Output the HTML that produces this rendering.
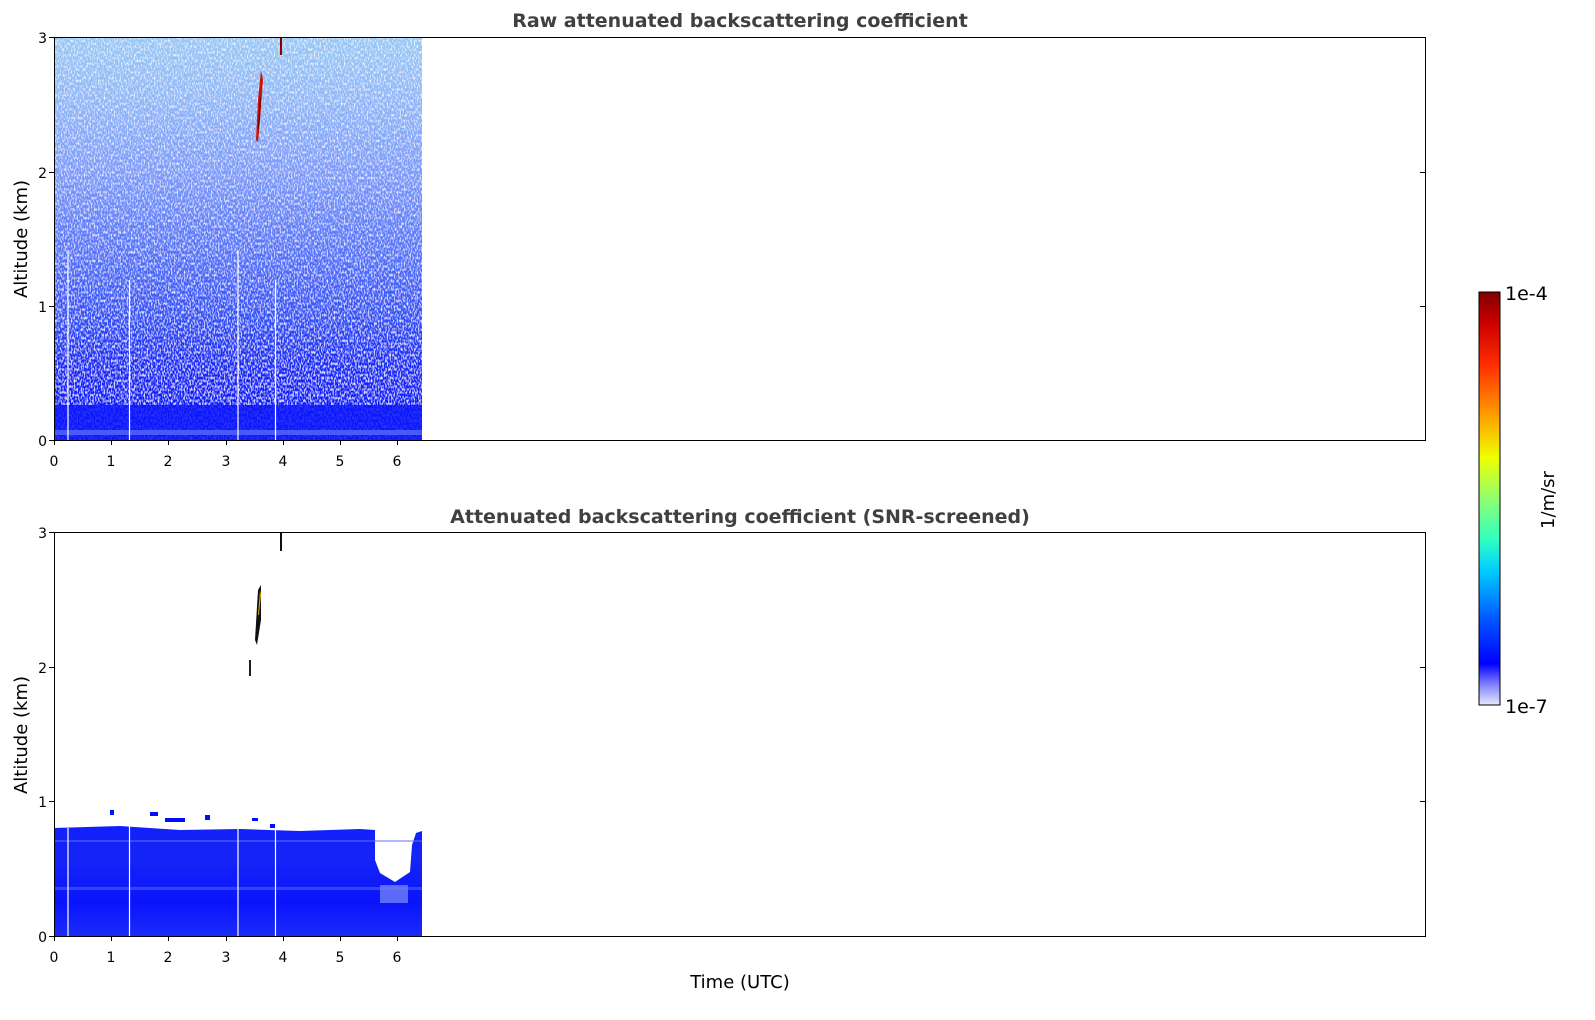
<!DOCTYPE html>
<html><head><meta charset="utf-8"><style>
html,body{margin:0;padding:0;background:#fff;width:1595px;height:1020px;overflow:hidden}
svg text{font-family:"DejaVu Sans","Liberation Sans",sans-serif}
</style></head><body>
<svg width="1595" height="1020" viewBox="0 0 1595 1020" xmlns="http://www.w3.org/2000/svg">
<defs>
<linearGradient id="top" x1="0" y1="1" x2="0" y2="0">
<stop offset="0" stop-color="#0a18fa"/>
<stop offset="0.1" stop-color="#1020fa"/>
<stop offset="0.2" stop-color="#1a30f8"/>
<stop offset="0.3" stop-color="#3050f8"/>
<stop offset="0.45" stop-color="#5070fa"/>
<stop offset="0.65" stop-color="#7898fa"/>
<stop offset="0.85" stop-color="#90b8f8"/>
<stop offset="1" stop-color="#98c8f4"/>
</linearGradient>
<filter id="nz" x="0" y="0" width="100%" height="100%">
<feTurbulence type="fractalNoise" baseFrequency="0.7 0.35" numOctaves="1" seed="3" result="t"/>
<feColorMatrix in="t" type="matrix" values="0 0 0 0 1  0 0 0 0 1  0 0 0 0 1  0 0 0 2.6 -1.2" result="w"/>
<feComposite in="w" in2="SourceGraphic" operator="in" result="wm"/>
<feMerge><feMergeNode in="SourceGraphic"/><feMergeNode in="wm"/></feMerge>
</filter>
<linearGradient id="cb" x1="0" y1="1" x2="0" y2="0">
<stop offset="0" stop-color="#e8e8ff"/>
<stop offset="0.05" stop-color="#8080ff"/>
<stop offset="0.1" stop-color="#0000ff"/>
<stop offset="0.2" stop-color="#0050ff"/>
<stop offset="0.33" stop-color="#00d0ff"/>
<stop offset="0.4" stop-color="#30ffc0"/>
<stop offset="0.5" stop-color="#90ff70"/>
<stop offset="0.6" stop-color="#f0ff00"/>
<stop offset="0.7" stop-color="#ffa000"/>
<stop offset="0.82" stop-color="#ff3000"/>
<stop offset="0.92" stop-color="#d00000"/>
<stop offset="1" stop-color="#800000"/>
</linearGradient>
<linearGradient id="bot" x1="0" y1="1" x2="0" y2="0">
<stop offset="0" stop-color="#1a2cf8"/>
<stop offset="0.3" stop-color="#0a14fc"/>
<stop offset="0.72" stop-color="#1525f6"/>
<stop offset="1" stop-color="#1020fa"/>
</linearGradient>
</defs>

<text x="740" y="27" text-anchor="middle" font-size="19" font-weight="bold" fill="#404040">Raw attenuated backscattering coefficient</text>
<text x="740" y="523" text-anchor="middle" font-size="19" font-weight="bold" fill="#404040">Attenuated backscattering coefficient (SNR-screened)</text>

<rect x="54" y="37" width="368" height="403" fill="url(#top)" filter="url(#nz)"/>
<rect x="54" y="405" width="368" height="35" fill="#0c18fa" opacity="0.85"/>
<rect x="54" y="430" width="368" height="5" fill="#4a5af8"/>
<g stroke="#fff" stroke-width="1.2">
<line x1="68" y1="250" x2="68" y2="440"/><line x1="129.5" y1="280" x2="129.5" y2="440"/>
<line x1="238" y1="250" x2="238" y2="440"/><line x1="275.5" y1="280" x2="275.5" y2="440"/>
</g>
<path d="M256 140 L258 100 L261 70 L263 80 L260 120 L258 142 Z" fill="#d01000"/>
<path d="M258 128 L260 95 L261 100 L259 130Z" fill="#700000"/>
<line x1="281" y1="37" x2="281" y2="55" stroke="#800000" stroke-width="2"/>

<path d="M54 936 L54 828 L120 826 L180 830 L240 829 L300 831 L330 830 L360 829 L375 830 L375 860 L380 873 L395 882 L410 872 L412 845 L416 833 L422 831 L422 936 Z" fill="url(#bot)"/>
<rect x="54" y="840" width="368" height="2" fill="#6070fa" opacity="0.5"/>
<rect x="54" y="887" width="368" height="3" fill="#5060f8" opacity="0.6"/>
<rect x="380" y="885" width="28" height="18" fill="#7080f8" opacity="0.8"/>
<g fill="#0010ff">
<rect x="110" y="810" width="4" height="5"/><rect x="150" y="812" width="8" height="4"/><rect x="165" y="818" width="20" height="4"/>
<rect x="205" y="815" width="5" height="5"/><rect x="252" y="818" width="6" height="3"/><rect x="270" y="824" width="5" height="4"/>
</g>
<g stroke="#fff" stroke-width="1.2">
<line x1="68" y1="828" x2="68" y2="936"/><line x1="129.5" y1="826" x2="129.5" y2="936"/>
<line x1="238" y1="829" x2="238" y2="936"/><line x1="275.5" y1="829" x2="275.5" y2="936"/>
</g>
<path d="M255 640 L258 590 L261 585 L261 620 L257 645Z" fill="#101010"/>
<path d="M258 615 L260 590 L261 595 L259 615Z" fill="#e0a000"/>
<rect x="249" y="660" width="2" height="16" fill="#202020"/>
<rect x="280" y="533" width="2" height="18" fill="#101010"/>

<rect x="54.5" y="37.5" width="1371" height="403" fill="none" stroke="#000" stroke-width="1"/>
<rect x="54.5" y="532.5" width="1371" height="404" fill="none" stroke="#000" stroke-width="1"/>

<g stroke="#000" stroke-width="1">
<path d="M54.5 440v5M111.5 440v5M168.5 440v5M226.5 440v5M283.5 440v5M340.5 440v5M397.5 440v5"/>
<path d="M54 37.5h-5M54 172.5h-5M54 306.5h-5M54 440.5h-5M1425 172.5h-5M1425 306.5h-5"/>
<path d="M54.5 936v5M111.5 936v5M168.5 936v5M226.5 936v5M283.5 936v5M340.5 936v5M397.5 936v5"/>
<path d="M54 532.5h-5M54 667.5h-5M54 801.5h-5M54 936.5h-5M1425 667.5h-5M1425 801.5h-5"/>
</g>
<g font-size="14" fill="#000">
<g text-anchor="middle">
<text x="54" y="466">0</text><text x="111" y="466">1</text><text x="168" y="466">2</text><text x="226" y="466">3</text><text x="283" y="466">4</text><text x="340" y="466">5</text><text x="397" y="466">6</text>
<text x="54" y="962">0</text><text x="111" y="962">1</text><text x="168" y="962">2</text><text x="226" y="962">3</text><text x="283" y="962">4</text><text x="340" y="962">5</text><text x="397" y="962">6</text>
</g>
<g text-anchor="end">
<text x="47" y="43">3</text><text x="47" y="178">2</text><text x="47" y="312">1</text><text x="47" y="446">0</text>
<text x="47" y="538">3</text><text x="47" y="673">2</text><text x="47" y="807">1</text><text x="47" y="942">0</text>
</g>
</g>
<text transform="translate(27,239) rotate(-90)" text-anchor="middle" font-size="18">Altitude (km)</text>
<text transform="translate(27,735) rotate(-90)" text-anchor="middle" font-size="18">Altitude (km)</text>
<text x="740" y="988" text-anchor="middle" font-size="18">Time (UTC)</text>

<rect x="1479" y="292" width="21" height="413" fill="url(#cb)" stroke="#000" stroke-width="1"/>
<text x="1505" y="300" font-size="19">1e-4</text>
<text x="1505" y="713" font-size="19">1e-7</text>
<text transform="translate(1554,500) rotate(-90)" text-anchor="middle" font-size="18">1/m/sr</text>
</svg>
</body></html>
